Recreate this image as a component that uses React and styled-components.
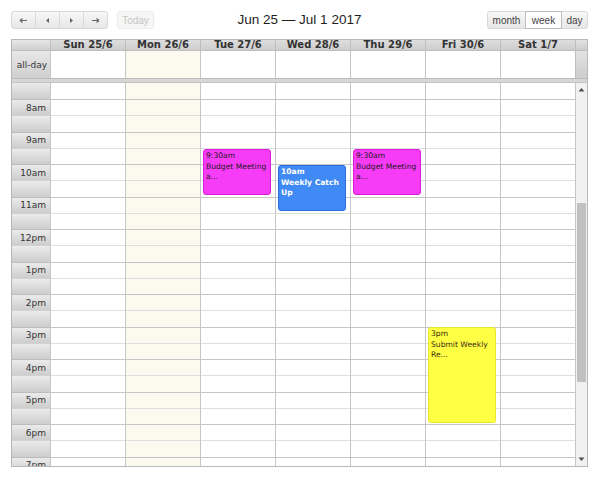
import React from 'react';
import styled, { createGlobalStyle } from 'styled-components';

const GlobalStyle = createGlobalStyle`
  html, body {
    margin: 0;
    padding: 0;
    background: #fff;
  }
  body {
    font-family: "DejaVu Sans", Verdana, sans-serif;
    color: #333;
  }
`;

const SLOT = 16.25;
const FIRST_SLOT = 17;
const DAY_WIDTH = 75;
const AXIS_WIDTH = 38;
const LINE = '#c6c6c6';
const HALF_LINE = '#dedede';

const days = [
  { label: 'Sun 25/6' },
  { label: 'Mon 26/6', today: true },
  { label: 'Tue 27/6' },
  { label: 'Wed 28/6' },
  { label: 'Thu 29/6' },
  { label: 'Fri 30/6' },
  { label: 'Sat 1/7' },
];

// 7:30am .. 7:30pm, the view is scrolled so 7:30 is the first row
const slots = [];
for (let h = 7; h < 20; h++) {
  if (h > 7) slots.push({ hour: h, half: false });
  slots.push({ hour: h, half: true });
}

const hourLabel = (h) => {
  if (h === 12) return '12pm';
  return h > 12 ? `${h - 12}pm` : `${h}am`;
};

const events = [
  { day: 2, top: 66, height: 46, time: '9:30am', title: 'Budget Meeting a...', kind: 'magenta' },
  { day: 3, top: 82, height: 46, time: '10am', title: 'Weekly Catch Up', kind: 'blue' },
  { day: 4, top: 66, height: 46, time: '9:30am', title: 'Budget Meeting a...', kind: 'magenta' },
  { day: 5, top: 244, height: 96, time: '3pm', title: 'Submit Weekly Re...', kind: 'yellow' },
];

const eventColors = {
  magenta: { bg: '#f73cf7', border: '#d81ed8', text: '#1a1a1a' },
  blue: { bg: '#3f8af4', border: '#2b6fd6', text: '#ffffff' },
  yellow: { bg: '#ffff44', border: '#e6e62a', text: '#3a2a10' },
};

const Page = styled.div`
  width: 577px;
  padding: 11px 0 0 11px;
`;

const Toolbar = styled.div`
  display: grid;
  grid-template-columns: 1fr auto 1fr;
  align-items: center;
  height: 18px;
  margin-bottom: 10px;
`;

const Side = styled.div`
  display: flex;
  align-items: center;
  gap: 9px;
  justify-content: ${(p) => (p.$right ? 'flex-end' : 'flex-start')};
`;

const Group = styled.div`
  display: flex;
`;

const ToolButton = styled.button`
  height: 18px;
  width: ${(p) => p.$w || 25}px;
  padding: 0;
  margin: 0;
  margin-left: ${(p) => (p.$first ? 0 : -1)}px;
  display: flex;
  align-items: center;
  justify-content: center;
  font-family: "Liberation Sans", Arial, sans-serif;
  font-size: 10px;
  color: ${(p) => (p.$disabled ? '#c4c4c4' : '#444')};
  background: ${(p) =>
    p.$active ? '#ffffff' : p.$disabled ? '#f6f6f6' : 'linear-gradient(#f7f7f7, #e7e7e7)'};
  border: 1px solid ${(p) => (p.$active ? '#bdbdbd' : p.$disabled ? '#ececec' : '#d9d9d9')};
  border-radius: ${(p) =>
    p.$single ? '3px' : p.$first ? '3px 0 0 3px' : p.$last ? '0 3px 3px 0' : '0'};
  position: relative;
  z-index: ${(p) => (p.$active ? 1 : 0)};
  box-sizing: border-box;
  cursor: pointer;
`;

const Title = styled.h2`
  margin: 0;
  font-family: "Liberation Sans", Arial, sans-serif;
  font-size: 13.5px;
  font-weight: normal;
  color: #1e1e1e;
  line-height: 18px;
  white-space: nowrap;
`;

const Calendar = styled.div`
  border: 1px solid #b8b8b8;
  width: 577px;
  box-sizing: border-box;
`;

const Row = styled.div`
  display: flex;
  box-sizing: content-box;
  height: ${(p) => p.$h}px;
  border-bottom: 1px solid #bdbdbd;
`;

const AxisCell = styled.div`
  width: ${AXIS_WIDTH}px;
  flex: none;
  box-sizing: border-box;
  background: linear-gradient(#e8e8e8, #cfcfcf);
  font-size: 9px;
  color: #333;
  display: flex;
  align-items: center;
  justify-content: flex-end;
  padding-right: 3px;
`;

const HeadCell = styled.div`
  width: ${DAY_WIDTH}px;
  flex: none;
  box-sizing: border-box;
  border-left: 1px solid #bdbdbd;
  background: linear-gradient(#dedede, #cdcdcd);
  font-size: 10px;
  font-weight: bold;
  color: #333;
  text-align: center;
  line-height: 10px;
`;

const AllDayCell = styled.div`
  width: ${DAY_WIDTH}px;
  flex: none;
  box-sizing: border-box;
  border-left: 1px solid ${LINE};
  background: ${(p) => (p.$today ? '#fcf9ee' : '#fff')};
`;

const GutterHead = styled.div`
  flex: 1;
  border-left: 1px solid #bdbdbd;
  background: linear-gradient(#e2e2e2, #cdcdcd);
`;

const Divider = styled.div`
  height: 3px;
  background: #d6d6d6;
  border-bottom: 1px solid #c2c2c2;
`;

const Body = styled.div`
  display: flex;
  height: 383px;
  overflow: hidden;
`;

const Axis = styled.div`
  width: ${AXIS_WIDTH}px;
  flex: none;
`;

const AxisSlot = styled.div`
  height: ${(p) => p.$h}px;
  box-sizing: border-box;
  border-bottom: 1px solid ${(p) => (p.$half ? '#bdbdbd' : '#d2d2d2')};
  background: linear-gradient(#ebebeb, #cdcdcd);
  font-size: 9px;
  color: #333;
  display: flex;
  align-items: center;
  justify-content: flex-end;
  padding-right: 4px;
`;

const DayCol = styled.div`
  width: ${DAY_WIDTH}px;
  flex: none;
  box-sizing: border-box;
  border-left: 1px solid ${LINE};
  position: relative;
  background: ${(p) => (p.$today ? '#fcf9ee' : '#fff')};
`;

const Slot = styled.div`
  height: ${(p) => p.$h}px;
  box-sizing: border-box;
  border-bottom: 1px solid ${(p) => (p.$half ? LINE : HALF_LINE)};
`;

const Event = styled.div`
  position: absolute;
  left: 2px;
  right: 4px;
  box-sizing: border-box;
  padding: 1px 2px;
  border-radius: 3px;
  overflow: hidden;
  font-size: 7.6px;
  line-height: 10.5px;
  background: ${(p) => eventColors[p.$kind].bg};
  border: 1px solid ${(p) => eventColors[p.$kind].border};
  color: ${(p) => eventColors[p.$kind].text};
  font-weight: ${(p) => (p.$kind === 'blue' ? 'bold' : 'normal')};
`;

const Scrollbar = styled.div`
  flex: 1;
  display: flex;
  flex-direction: column;
  background: #f1f1f1;
  border-left: 1px solid ${LINE};
`;

const ScrollArrow = styled.div`
  height: 13px;
  flex: none;
  display: flex;
  align-items: center;
  justify-content: center;
`;

const Track = styled.div`
  flex: 1;
  padding: 0 1px;
`;

const Thumb = styled.div`
  margin-top: 107px;
  height: 179px;
  background: #c1c1c1;
`;

const Arrow = ({ dir }) => {
  const paths = {
    first: 'M1 4.5h7M1 4.5l2.5-2M1 4.5l2.5 2',
    last: 'M1 4.5h7M8 4.5l-2.5-2M8 4.5l-2.5 2',
  };
  if (dir === 'prev' || dir === 'next') {
    return (
      <svg width="9" height="9" viewBox="0 0 9 9">
        <path d={dir === 'prev' ? 'M3 4.5L6 2v5z' : 'M6 4.5L3 2v5z'} fill="#666" />
      </svg>
    );
  }
  return (
    <svg width="9" height="9" viewBox="0 0 9 9">
      <path d={paths[dir]} stroke="#666" strokeWidth="1.1" fill="none" />
    </svg>
  );
};

const ScrollTriangle = ({ up }) => (
  <svg width="7" height="5" viewBox="0 0 7 5">
    <path d={up ? 'M0.5 4.5L3.5 1l3 3.5z' : 'M0.5 0.5L3.5 4l3-3.5z'} fill="#505050" />
  </svg>
);

export default function App() {
  return (
    <>
      <GlobalStyle />
      <Page>
        <Toolbar>
          <Side>
            <Group>
              <ToolButton $first><Arrow dir="first" /></ToolButton>
              <ToolButton><Arrow dir="prev" /></ToolButton>
              <ToolButton><Arrow dir="next" /></ToolButton>
              <ToolButton $last><Arrow dir="last" /></ToolButton>
            </Group>
            <ToolButton $first $single $disabled $w={37}>Today</ToolButton>
          </Side>
          <Title>Jun 25 — Jul 1 2017</Title>
          <Side $right>
            <Group>
              <ToolButton $first $w={39}>month</ToolButton>
              <ToolButton $active $w={37}>week</ToolButton>
              <ToolButton $last $w={27}>day</ToolButton>
            </Group>
          </Side>
        </Toolbar>

        <Calendar>
          <Row $h={10}>
            <AxisCell />
            {days.map((d) => (
              <HeadCell key={d.label}>{d.label}</HeadCell>
            ))}
            <GutterHead />
          </Row>
          <Row $h={27}>
            <AxisCell>all-day</AxisCell>
            {days.map((d) => (
              <AllDayCell key={d.label} $today={d.today} />
            ))}
            <GutterHead />
          </Row>
          <Divider />
          <Body>
            <Axis>
              {slots.map((s, i) => (
                <AxisSlot key={i} $half={s.half} $h={i === 0 ? FIRST_SLOT : SLOT}>
                  {!s.half && hourLabel(s.hour)}
                </AxisSlot>
              ))}
            </Axis>
            {days.map((d, di) => (
              <DayCol key={d.label} $today={d.today}>
                {slots.map((s, i) => (
                  <Slot key={i} $half={s.half} $h={i === 0 ? FIRST_SLOT : SLOT} />
                ))}
                {events
                  .filter((e) => e.day === di)
                  .map((e) => (
                    <Event key={e.title + e.day} $kind={e.kind} style={{ top: e.top, height: e.height }}>
                      <div>{e.time}</div>
                      <div>{e.title}</div>
                    </Event>
                  ))}
              </DayCol>
            ))}
            <Scrollbar>
              <ScrollArrow><ScrollTriangle up /></ScrollArrow>
              <Track><Thumb /></Track>
              <ScrollArrow><ScrollTriangle /></ScrollArrow>
            </Scrollbar>
          </Body>
        </Calendar>
      </Page>
    </>
  );
}
